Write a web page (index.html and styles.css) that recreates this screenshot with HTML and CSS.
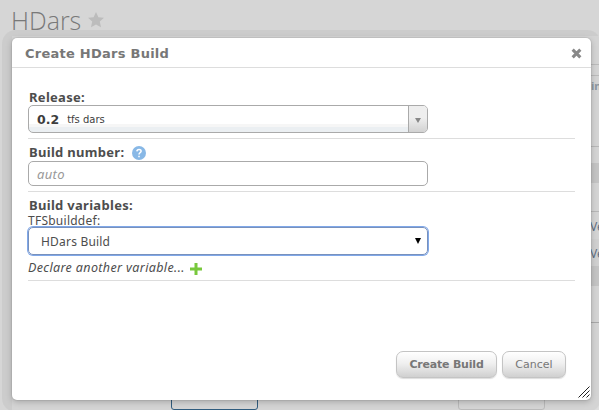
FILE: index.html
```html
<!DOCTYPE html>
<html lang="en">
<head>
<meta charset="utf-8">
<title>HDars</title>
<link rel="stylesheet" href="styles.css">
</head>
<body>
<div class="page">
  <header class="page-header">
    <h1>HDars</h1>
    <svg class="star" viewBox="0 0 16 16"><path d="M8 0l2.400 5.200 5.600.6-4.200 3.800L13 15.300 8 12.400 3 15.300l1.200-5.700L0 5.800l5.600-.6z"/></svg>
  </header>
  <div class="panel">
    <div class="row r1"></div>
    <div class="row r2"></div>
    <div class="row r3">in</div>
    <div class="row r4"></div>
    <div class="row band r5"></div>
    <div class="row r6"></div>
    <div class="row item">Ve</div>
    <div class="row item alt">Ve</div>
    <div class="row band r7"></div>
    <div class="row r8"></div>
    <div class="bottom"><div class="tab active"></div><div class="tab"></div></div>
  </div>
</div>
<div class="dialog">
  <div class="titlebar">
    <h2>Create HDars Build</h2>
    <svg class="close" viewBox="0 0 10 10"><path d="M1.500 1.500l7 7M8.500 1.500l-7 7"/></svg>
  </div>
  <form class="form">
    <section class="release">
      <label>Release:</label>
      <div class="field combo"><b>0.2</b><small>tfs dars</small><span class="trigger"><i></i></span></div>
    </section>
    <section class="number">
      <label>Build number:
        <svg class="help" viewBox="0 0 14 14"><circle cx="7" cy="7" r="7"/><path d="M4.900 5.400C5 2.800 9.200 2.900 9.100 5.300 9.100 6.800 7 6.600 7 8.500M7 9.700v1.500"/></svg></label>
      <div class="field input">auto</div>
    </section>
    <section class="variables">
      <label>Build variables:</label>
      <div class="varname">TFSbuilddef:</div>
      <div class="field select"><span>HDars Build</span><i></i></div>
      <div class="declare"><em>Declare another variable...</em><svg class="plus" viewBox="0 0 12 12"><path d="M6 0v12M0 6h12"/></svg></div>
    </section>
  </form>
  <div class="buttons"><button class="primary">Create Build</button><button>Cancel</button></div>
  <svg class="grip" viewBox="0 0 12 12"><path d="M.5 11.500l11-11M4.500 11.500l7-7M8.500 11.500l3-3"/></svg>
</div>
</body>
</html>
```

FILE: styles.css
```css
* { box-sizing: border-box; }
body { margin: 0; width: 599px; height: 410px; overflow: hidden; background: #d6d6d6; color: #4d4d4d; font: 12px "Noto Sans", sans-serif; }
h1, h2 { margin: 0; }
.page { height: 410px; }
.page-header { display: flex; align-items: flex-start; height: 36px; padding-left: 11px; }
h1 { font: 300 25px/36px "Open Sans", sans-serif; color: #797979; padding-top: 2px; }
.star { width: 16px; height: 16px; margin: 12px 0 0 7px; fill: #bcbcbc; }
.panel { height: 374px; margin-left: 12px; background: #dedede; }
.row { padding-left: 579px; white-space: nowrap; overflow: hidden; color: #65758a; line-height: 20px; }
.r1 { height: 29px; border-bottom: 1px solid #c4c4c4; }
.r2 { height: 11px; border-bottom: 1px solid #c4c4c4; }
.r3 { height: 71px; border-bottom: 1px solid #c0c0c0; font-weight: 700; font-size: 11px; color: #929da9; }
.r4 { height: 16px; }
.band { background: #cdcdcd; height: 20px; }
.r6 { height: 29px; border-bottom: 1px solid #c0c0c0; }
.item { height: 27px; line-height: 30px; text-indent: -1px; }
.alt { background: #dadada; }
.r8 { height: 37px; border-bottom: 1px solid #b0b0b0; }
.bottom { display: flex; gap: 200px; padding-left: 159px; }
.tab { width: 87px; height: 87px; border: 1px solid #c3c3c3; border-radius: 3px; }
.active { border-color: #336184; }
.dialog { position: absolute; left: 12px; top: 38px; width: 579px; height: 362px; display: flex; flex-direction: column; background: #fff; border-radius: 5px; box-shadow: 0 0 0 1px rgba(0,0,0,.05), 0 2px 6px rgba(0,0,0,.22), 0 2px 0 10px rgba(0,0,0,.045); }
.titlebar { height: 30px; border-bottom: 1px solid #ddd; display: flex; align-items: center; justify-content: space-between; padding: 0 9px 0 13px; }
h2 { font: bold 13px/29px "DejaVu Sans", sans-serif; letter-spacing: .25px; padding-top: 2px; color: #777; }
.close { width: 11px; height: 11px; margin-top: 1px; fill: none; stroke: #888; stroke-width: 2.8; }
.form { padding: 22px 16px 0; }
.form section { border-bottom: 1px solid #ddd; }
label { display: flex; align-items: center; height: 15px; padding-left: 1px; font-size: 13px; font-weight: 700; line-height: 15px; letter-spacing: .3px; }
.release { height: 49px; }
.number { height: 53px; padding-top: 6px; }
.variables { height: 89px; padding-top: 6px; }
.help { width: 14px; height: 14px; margin-left: 8px; }
.help circle { fill: #88b8e6; }
.help path { fill: none; stroke: #fff; stroke-width: 1.5; }
.field { width: 400px; border: 1px solid #aaa; border-radius: 5px; display: flex; align-items: center; }
.combo { height: 28px; background: linear-gradient(#fff 68%, #f6f6f6 68%, #f6f6f6 82%, #ebeff2 82%); padding-left: 8px; overflow: hidden; color: #3d3d3d; }
.combo b { font: bold 12.500px "DejaVu Sans", sans-serif; }
.combo small { font: 10px "DejaVu Sans", sans-serif; margin: 1px 0 0 8px; }
.trigger { width: 19px; height: 100%; margin-left: auto; border-left: 1px solid #aaa; background: linear-gradient(#eee 45%, #d2d2d2); display: flex; align-items: center; justify-content: center; }
.trigger i { border: 3px solid transparent; border-top: 5px solid #888; border-bottom: 0; margin-top: 3px; }
.input { height: 25px; margin-top: 1px; padding-left: 8px; font-size: 13px; letter-spacing: .3px; font-style: italic; color: #999; line-height: 16px; }
.varname { font-size: 12px; line-height: 15px; height: 14px; letter-spacing: .25px; }
.select { height: 28px; border-color: #7891bd; box-shadow: 0 0 0 1px #80a8e9; padding: 0 6px 0 12px; justify-content: space-between; letter-spacing: .2px; }
.select span { padding-top: 1px; }
.select i { border: 3px solid transparent; border-top: 6px solid #000; border-bottom: 0; margin-bottom: 1px; }
.declare { height: 25px; display: flex; align-items: center; font-size: 12.500px; letter-spacing: .38px; line-height: 16px; }
.plus { width: 12px; height: 12px; margin: 3px 0 0 5px; stroke: #78c83c; stroke-width: 3; }
.buttons { display: flex; justify-content: flex-end; gap: 5px; margin: 70px 25px 0 0; }
button { height: 27px; width: 64px; padding: 0; border: 1px solid #c4c4c4; border-radius: 7px; background: linear-gradient(#fff, #f0f0f0 45%, #d0d0d0); font: 11px "DejaVu Sans", sans-serif; color: #777; box-shadow: 0 1px 1px #ddd; }
.primary { width: 101px; font-weight: bold; letter-spacing: -.2px; }
.grip { position: absolute; right: 1px; bottom: 2px; width: 12px; height: 12px; fill: none; stroke: #222; }
```
